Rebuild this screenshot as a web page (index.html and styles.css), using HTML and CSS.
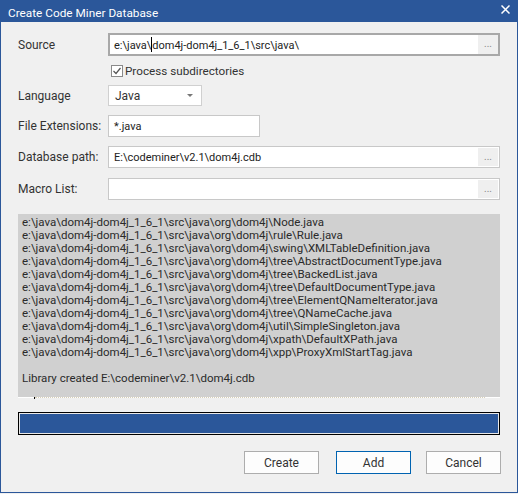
FILE: index.html
```html
<!DOCTYPE html>
<html lang="en">
<head>
    <meta charset="UTF-8">
    <title>Create Code Miner Database</title>
    <link rel="stylesheet" href="styles.css">
</head>
<body>
    <div class="dialog">
        <div class="titlebar">
            <span class="title">Create Code Miner Database</span>
            <svg class="close" width="9" height="9" viewBox="0 0 9 9">
                <path d="M0.5 0.5 L8.5 8.5 M8.5 0.5 L0.5 8.5" stroke="#fff" stroke-width="1.5"/>
            </svg>
        </div>

        <div class="content">
            <div class="row row-source">
                <label>Source</label>
                <div class="field wide">
                    <span class="value">e:\java\<span class="caret"></span>dom4j-dom4j_1_6_1\src\java\</span>
                    <span class="browse">...</span>
                </div>
            </div>

            <div class="row row-check">
                <label></label>
                <span class="checkbox">
                    <svg width="10" height="10" viewBox="0 0 10 10">
                        <path d="M1.5 5 L4 7.5 L8.5 2" fill="none" stroke="#555" stroke-width="1.2"/>
                    </svg>
                </span>
                <span class="check-label">Process subdirectories</span>
            </div>

            <div class="row row-lang">
                <label>Language</label>
                <div class="select">
                    <span class="value">Java</span>
                    <span class="arrow"></span>
                </div>
            </div>

            <div class="row row-ext">
                <label>File Extensions:</label>
                <div class="field short">
                    <span class="value">*.java</span>
                </div>
            </div>

            <div class="row row-db">
                <label>Database path:</label>
                <div class="field wide">
                    <span class="value">E:\codeminer\v2.1\dom4j.cdb</span>
                    <span class="browse">...</span>
                </div>
            </div>

            <div class="row row-macro">
                <label>Macro List:</label>
                <div class="field wide">
                    <span class="value"></span>
                    <span class="browse">...</span>
                </div>
            </div>

            <div class="log">
                <div class="log-text">
                    <div>e:\java\dom4j-dom4j_1_6_1\src\java\org\dom4j\Node.java</div>
                    <div>e:\java\dom4j-dom4j_1_6_1\src\java\org\dom4j\rule\Rule.java</div>
                    <div>e:\java\dom4j-dom4j_1_6_1\src\java\org\dom4j\swing\XMLTableDefinition.java</div>
                    <div>e:\java\dom4j-dom4j_1_6_1\src\java\org\dom4j\tree\AbstractDocumentType.java</div>
                    <div>e:\java\dom4j-dom4j_1_6_1\src\java\org\dom4j\tree\BackedList.java</div>
                    <div>e:\java\dom4j-dom4j_1_6_1\src\java\org\dom4j\tree\DefaultDocumentType.java</div>
                    <div>e:\java\dom4j-dom4j_1_6_1\src\java\org\dom4j\tree\ElementQNameIterator.java</div>
                    <div>e:\java\dom4j-dom4j_1_6_1\src\java\org\dom4j\tree\QNameCache.java</div>
                    <div>e:\java\dom4j-dom4j_1_6_1\src\java\org\dom4j\util\SimpleSingleton.java</div>
                    <div>e:\java\dom4j-dom4j_1_6_1\src\java\org\dom4j\xpath\DefaultXPath.java</div>
                    <div>e:\java\dom4j-dom4j_1_6_1\src\java\org\dom4j\xpp\ProxyXmlStartTag.java</div>
                    <div>&nbsp;</div>
                    <div>Library created E:\codeminer\v2.1\dom4j.cdb</div>
                </div>
                <div class="log-edge"><span class="tick"></span><span class="dots"></span></div>
            </div>

            <div class="progress">
                <div class="progress-fill"></div>
            </div>

            <div class="buttons">
                <button>Create</button>
                <button class="default">Add</button>
                <button>Cancel</button>
            </div>
        </div>
    </div>
</body>
</html>
```

FILE: styles.css
```css
* {
    margin: 0;
    padding: 0;
    box-sizing: border-box;
}

body {
    width: 518px;
    height: 494px;
    background-color: #f0f0f0;
    font-family: Roboto, "Noto Sans", sans-serif;
    font-size: 12px;
    color: #333;
    overflow: hidden;
}

.dialog {
    width: 518px;
    height: 493px;
    border: 1px solid #2b579a;
    border-top: none;
    background-color: #f0f0f0;
}

.titlebar {
    height: 22px;
    margin: 0 -1px;
    background-color: #2b579a;
    display: flex;
    align-items: flex-start;
    justify-content: space-between;
    padding: 0 8px 0 8px;
}

.title {
    color: #fff;
    font-size: 11.8px;
    line-height: 14px;
    margin-top: 6px;
}

.close {
    margin-top: 5px;
}

.content {
    padding: 11px 17px 0;
}

.row {
    display: flex;
    align-items: center;
}

.row label {
    width: 90px;
    flex-shrink: 0;
    color: #333;
    font-size: 12px;
}

.row-source { height: 23px; }
.row-check { height: 14px; margin-top: 8px; }
.row-lang { height: 21px; margin-top: 7px; }
.row-ext { height: 22px; margin-top: 9px; }
.row-db { height: 22px; margin-top: 9px; }
.row-macro { height: 22px; margin-top: 10px; }

.field {
    height: 100%;
    border: 1px solid #c8c8c8;
    background-color: #fff;
    display: flex;
    align-items: center;
    padding: 1px;
}

.row-source .field {
    border: 2px solid #a8a8a8;
    padding: 0;
}

.field.wide {
    width: 392px;
}

.field.short {
    width: 152px;
}

.field .value {
    flex: 1;
    padding-left: 4px;
    color: #222;
    font-size: 11px;
    white-space: nowrap;
}

.caret {
    display: inline-block;
    width: 1px;
    height: 15px;
    background-color: #000;
    vertical-align: -3px;
}

.browse {
    width: 20px;
    height: 100%;
    background-color: #efefef;
    color: #888;
    font-size: 10px;
    text-align: center;
    line-height: 18px;
}

.checkbox {
    width: 12px;
    height: 12px;
    margin-left: 3px;
    border: 1px solid #8a8a8a;
    background-color: #fff;
    display: flex;
    align-items: center;
    justify-content: center;
}

.check-label {
    margin-left: 2px;
    font-size: 11.7px;
}

.select {
    width: 94px;
    height: 100%;
    border: 1px solid #d0d0d0;
    background-color: #fff;
    display: flex;
    align-items: center;
    justify-content: space-between;
    padding: 0 8px 0 6px;
    font-size: 12px;
}

.arrow {
    width: 0;
    height: 0;
    border-left: 3px solid transparent;
    border-right: 3px solid transparent;
    border-top: 3px solid #777;
}

.log {
    margin-top: 14px;
    height: 184px;
    background-color: #d0d0d0;
    display: flex;
    flex-direction: column;
}

.log-text {
    flex: 1;
    padding: 2px 0 0 4px;
    font-size: 11.5px;
    line-height: 13px;
    color: #2a2a2a;
    white-space: nowrap;
    overflow: hidden;
}

.log-edge {
    height: 1px;
    background-color: #fff;
    display: flex;
}

.log-edge .tick {
    width: 1px;
    height: 2px;
    margin-left: 16px;
    background-color: #000;
}

.log-edge .dots {
    flex: 1;
    margin: 0 15px 0 0;
    border-top: 1px dotted #d8d0b8;
}

.progress {
    margin-top: 14px;
    height: 23px;
    border: 1px solid #000;
    padding: 1px;
    background-color: #e8e8e8;
}

.progress-fill {
    height: 100%;
    background-color: #2b579a;
}

.buttons {
    margin-top: 16px;
    display: flex;
    justify-content: flex-end;
    gap: 17px;
    margin-right: -1px;
}

.buttons button {
    width: 75px;
    height: 23px;
    border: 1px solid #adadad;
    background-color: #fdfdfd;
    font-family: inherit;
    font-size: 12px;
    color: #333;
}

.buttons button.default {
    border: 1px solid #0063b1;
    margin-right: -2px;
}
```
